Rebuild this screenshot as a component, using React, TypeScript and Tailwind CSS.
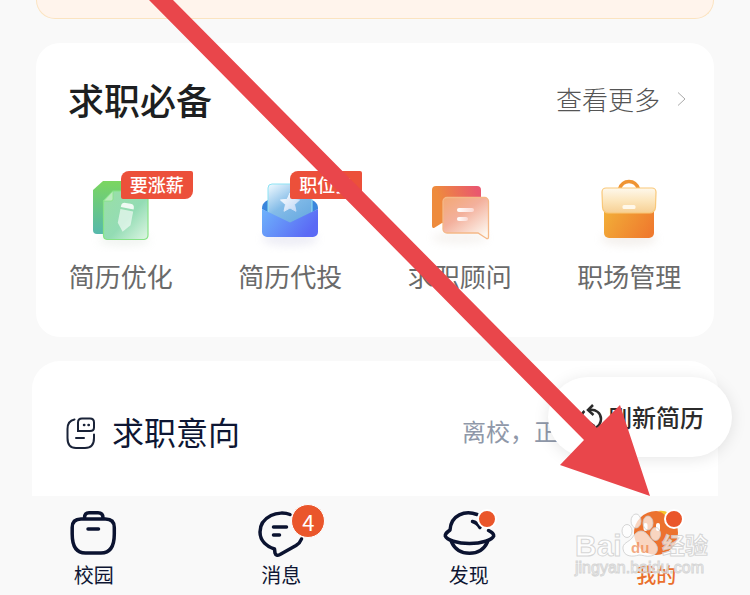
import type { ReactNode } from 'react';

type Service = { label: string; icon: ReactNode; tag?: string };
type Tab = { label: string; icon: ReactNode; count?: number; dot?: boolean; active?: boolean };

function ResumeIcon() {
return (
<svg viewBox="0 0 64 64" className="w-16 h-16 overflow-visible" aria-hidden="true">
<defs>
<linearGradient id="resBack" x1="0" y1="0" x2="0" y2="1"><stop stopColor="#7bd660" /><stop offset="1" stopColor="#56b8ac" /></linearGradient>
<linearGradient id="resFront" x1="0" y1="0" x2="1" y2="1"><stop stopColor="#9adfa6" /><stop offset="0.55" stopColor="#93dcb4" /><stop offset="1" stopColor="#dff6e4" /></linearGradient>
<filter id="soft" x="-30%" y="-50%" width="160%" height="200%"><feGaussianBlur stdDeviation="4" /></filter>
</defs>
<ellipse cx="35" cy="61" rx="26" ry="6" fill="#b7c9b7" opacity="0.2" filter="url(#soft)" />
<path d="M14 2H46a4 4 0 0 1 4 4V51a4 4 0 0 1-4 4H8a4 4 0 0 1-4-4V11Z" fill="url(#resBack)" />
<path d="M24 12H55a4 4 0 0 1 4 4V56a4.500 4.500 0 0 1-4 4.500H18a4 4 0 0 1-3.500-4V22Z" fill="url(#resFront)" stroke="#86e386" strokeWidth="1.200" />
<path d="M24 12V20a2 2 0 0 1-2 2H14.500Z" fill="#bdecbf" stroke="#86e386" strokeWidth="0.800" />
<g transform="rotate(11 36 38)" fill="#fff">
<path d="M30 28a4 4 0 0 1 4-4h5a4 4 0 0 1 4 4v1H30Z" opacity="0.85" />
<path d="M30 31H43V45L36.500 53L30 45Z" opacity="0.6" />
</g>
</svg>
);
}

function MailIcon() {
return (
<svg viewBox="0 0 64 64" className="w-16 h-16 overflow-visible" aria-hidden="true">
<defs>
<linearGradient id="mailFront" x1="0" y1="0" x2="1" y2="0.4"><stop stopColor="#6eb3fb" /><stop offset="1" stopColor="#5b6af5" /></linearGradient>
<linearGradient id="mailPaper" x1="0" y1="0" x2="0.7" y2="1"><stop stopColor="#f2fbff" /><stop offset="0.5" stopColor="#84bce8" /><stop offset="1" stopColor="#66a8e0" /></linearGradient>
<linearGradient id="mailStar" x1="0" y1="0" x2="1" y2="1"><stop stopColor="#fff" /><stop offset="1" stopColor="#bcd5f5" /></linearGradient>
</defs>
<ellipse cx="32" cy="60" rx="28" ry="7" fill="#a9a9d0" opacity="0.2" filter="url(#soft)" />
<path d="M10 21C6 23 4 25 4 30L32 46L60 30C60 25 58 23 54 21Z" fill="#3a86dc" />
<path d="M10 48V9a4 4 0 0 1 4-4H50a4 4 0 0 1 4 4V48Z" fill="url(#mailPaper)" stroke="#8ee3f4" strokeWidth="1" />
<path d="M32 14L34.800 20.300L41.500 21L36.500 25.600L38 32.300L32 29L26 32.300L27.500 25.600L22.500 21L29.200 20.300Z" fill="url(#mailStar)" stroke="url(#mailStar)" strokeWidth="1" strokeLinejoin="round" />
<path d="M4 30L32 43.500L60 30V53a5 5 0 0 1-5 5H9a5 5 0 0 1-5-5Z" fill="url(#mailFront)" />
</svg>
);
}

function AdvisorIcon() {
return (
<svg viewBox="0 0 64 64" className="w-16 h-16 overflow-visible" aria-hidden="true">
<defs>
<linearGradient id="advBack" x1="0.2" y1="0.6" x2="1" y2="0.4"><stop stopColor="#ee8b3d" /><stop offset="1" stopColor="#e9586e" /></linearGradient>
<linearGradient id="advFront" x1="0" y1="0" x2="0.8" y2="1"><stop stopColor="#f3a873" /><stop offset="0.45" stopColor="#f3b09c" /><stop offset="1" stopColor="#fdf6ee" /></linearGradient>
<linearGradient id="advBar"><stop stopColor="#fff" /><stop offset="1" stopColor="#fbd9d3" /></linearGradient>
</defs>
<ellipse cx="32" cy="59" rx="28" ry="6" fill="#c9b8a9" opacity="0.16" filter="url(#soft)" />
<path d="M8 7H49a4 4 0 0 1 4 4V44H14L6 49Q4 49.500 4 47V11a4 4 0 0 1 4-4Z" fill="url(#advBack)" />
<path d="M19 18.500H56.500a4 4 0 0 1 4 4V58Q60.500 60 58.500 59.500L50 54H19a4 4 0 0 1-4-4V22.500a4 4 0 0 1 4-4Z" fill="url(#advFront)" stroke="#f5b887" strokeWidth="1.300" />
<rect x="29" y="29" width="17" height="4" rx="2" fill="url(#advBar)" />
<rect x="29" y="38" width="11" height="4" rx="2" fill="url(#advBar)" />
</svg>
);
}

function CareerIcon() {
return (
<svg viewBox="0 0 64 64" className="w-16 h-16 overflow-visible" aria-hidden="true">
<defs>
<linearGradient id="carBody" x1="0" y1="0.3" x2="1" y2="0.7"><stop stopColor="#f2ad38" /><stop offset="1" stopColor="#ef7a2e" /></linearGradient>
<linearGradient id="carFlap" x1="0" y1="0" x2="0" y2="1"><stop stopColor="#fef8ec" /><stop offset="0.5" stopColor="#fce6bd" /><stop offset="1" stopColor="#f6cf93" /></linearGradient>
</defs>
<ellipse cx="32" cy="60" rx="28" ry="7" fill="#c9b8a9" opacity="0.2" filter="url(#soft)" />
<path d="M22.500 10Q25 2.500 32 2.500T41.500 10" fill="none" stroke="#ef9433" strokeWidth="3.500" />
<path d="M7 26H57V54a5 5 0 0 1-5 5H12a5 5 0 0 1-5-5Z" fill="url(#carBody)" />
<path d="M9 9H55a4 4 0 0 1 4 4L58.500 28a6 6 0 0 1-6 6H11.500a6 6 0 0 1-6-6L5 13a4 4 0 0 1 4-4Z" fill="url(#carFlap)" stroke="#f9c879" strokeWidth="1.200" />
<rect x="25.500" y="26" width="13" height="4" rx="1.500" fill="#fff8ea" />
</svg>
);
}

const lineIcon = 'w-12 h-12 overflow-visible fill-none stroke-[#0b1330] stroke-[3.5]';

function CampusIcon() {
return (
<svg viewBox="0 0 48 48" className={lineIcon} strokeLinecap="round" aria-hidden="true">
<path d="M14.500 10Q14.500 4.800 19 4.800H28Q33 4.800 33 10" />
<path d="M11 11H35.500Q44.300 11 44.300 19.500V26Q44.300 45 31 45H15.500Q2.200 45 2.200 26V19.500Q2.200 11 11 11Z" />
<path d="M18 21H28.500" />
</svg>
);
}

function MessageIcon() {
return (
<svg viewBox="0 0 48 48" className={lineIcon} strokeLinecap="round" strokeLinejoin="round" aria-hidden="true">
<path d="M33 6.500C28 4.500 20 4.500 14 7.500C7 11 3 17 3 24C3 33 10 38.500 17.500 41L18 45Q19 48.500 23 46.500L39 37.500Q43 35 44.500 31" />
<path d="M16.500 19H29.500M16.500 27H22.500" />
</svg>
);
}

function DiscoverIcon() {
return (
<svg viewBox="0 0 48 48" className={lineIcon} strokeLinecap="round" strokeLinejoin="round" aria-hidden="true">
<path d="M32 6.500C20 2 6 7 5 22C1 25 0 26 .3 28C2 32 12 35.500 24.500 35.500C37 35.500 47 32 48.700 28C49 25.500 47 24.500 43.500 22.500" />
<path d="M6.500 34C10 41.500 16 45.300 24.500 45.300C33 45.300 39 41.500 42.500 34" />
<path d="M27.500 13.500Q32 14.500 35 19.500" />
</svg>
);
}

function MineIcon() {
return (
<svg viewBox="0 0 48 48" className="w-12 h-12 overflow-visible" aria-hidden="true">
<circle cx="24" cy="25" r="22" fill="#ec722e" />
<path d="M26 3Q32 2 37 5L34 8Q30 4 26 3Z" fill="#f6c52f" />
<rect x="11.500" y="15" width="4" height="8" rx="2" fill="#fff" />
<rect x="24" y="15" width="4" height="8" rx="2" fill="#fff" />
</svg>
);
}

function IntentIcon() {
return (
<svg viewBox="0 0 30 32" className="w-[30px] h-8 fill-none stroke-[#1a2338] stroke-2" strokeLinecap="round" aria-hidden="true">
<path d="M8.500 2.500C3 3.500 1.500 7 1.500 12V21C1.500 28 4 31 10 31H19C25 31 28 28 28 21V17.500" />
<path d="M16 1.500H24Q28 1.500 28 5.500V10.500Q28 14 24 14H12V5.500Q12 1.500 16 1.500Z" />
<path d="M10 21H18" />
<path d="M18 8H18.300M22.500 8H22.800" strokeWidth="2.500" />
</svg>
);
}

function RefreshIcon() {
return (
<svg viewBox="0 0 24 28" className="w-6 h-7 fill-none stroke-[#2b2b2b] stroke-[2.5]" aria-hidden="true">
<path d="M9 7C16 6 21 10 21 16C21 20 19 23 15 25" />
<path d="M13 2L8 7L13.500 12" />
<path d="M13 22.500C6 24 1.500 20 1.500 14.500C1.500 11.500 2.500 9.500 4.500 8" />
<path d="M8.500 28L13.500 22.500L7.500 18.500" />
</svg>
);
}

const services: Service[] = [
{ label: '简历优化', icon: <ResumeIcon />, tag: '要涨薪' },
{ label: '简历代投', icon: <MailIcon />, tag: '职位多' },
{ label: '求职顾问', icon: <AdvisorIcon /> },
{ label: '职场管理', icon: <CareerIcon /> },
];

const tabs: Tab[] = [
{ label: '校园', icon: <CampusIcon /> },
{ label: '消息', icon: <MessageIcon />, count: 4 },
{ label: '发现', icon: <DiscoverIcon />, dot: true },
{ label: '我的', icon: <MineIcon />, dot: true, active: true },
];

function Watermark() {
return (
<svg viewBox="0 0 136 68" className="absolute right-10 bottom-4 w-[136px] h-[68px] overflow-visible pointer-events-none font-['Liberation_Sans','Noto_Sans_CJK_SC',sans-serif]" fill="#fff" fillOpacity="0.7" stroke="#cccccc" strokeOpacity="0.8" strokeWidth="1">
<text x="1" y="45" fontSize="30" fontWeight="700">Bai</text>
<ellipse cx="53" cy="20" rx="5" ry="6.500" />
<ellipse cx="62" cy="10" rx="5" ry="7" />
<ellipse cx="74" cy="12" rx="5" ry="7" />
<ellipse cx="81.500" cy="23" rx="5" ry="6.500" />
<path d="M67 20C73 20 75 27 80 31C86 36 84 44 77 45C72 46 69 44 65 44C59 46 50 46 49 38C48 32 55 31 58 27C61 23 63 20 67 20Z" />
<text x="57" y="42" fontSize="15" fontWeight="700" fill="#ec722e" fillOpacity="0.6" stroke="none">du</text>
<text x="88" y="43" fontSize="23" fontWeight="700">经验</text>
<text x="1" y="62" fontSize="16">jingyan.baidu.com</text>
</svg>
);
}

function Arrow() {
return (
<svg viewBox="0 0 750 595" className="absolute left-0 top-0 z-20 w-[750px] h-[595px] pointer-events-none" aria-hidden="true">
<path d="M149 0H173L597 428L620 405L650 496L560 465L584 440Z" fill="#e9464b" />
</svg>
);
}

export default function App() {
return (
<div className="relative min-h-screen overflow-hidden flex flex-col bg-[#f9f9f9] font-['Noto_Sans_CJK_SC',sans-serif]">
<main className="flex-1 flex flex-col gap-6">
<div className="mx-9 h-[19px] rounded-b-3xl border border-t-0 border-[#fbe3c0] bg-[#fff4ec]" />

<section className="mx-9 rounded-3xl bg-white pt-[38px] pb-12">
<div className="flex items-center justify-between pl-8 pr-6">
<h2 className="text-[36px] leading-9 font-medium text-[#1d1f21]">求职必备</h2>
<a href="#more" className="flex items-center gap-3 text-[26px] leading-9 font-light text-[#555]">
查看更多
<svg viewBox="0 0 18 18" className="w-[18px] h-[18px] fill-none stroke-[#aaa]" aria-hidden="true"><path d="M6 2.500L13 9L6 15.500" /></svg>
</a>
</div>
<div className="mt-[62px] grid grid-cols-4">
{services.map(s => (
<a key={s.label} href="#service" className="flex flex-col items-center gap-5">
<span className="relative">
{s.icon}
{s.tag && (
<span className="absolute left-8 -top-2 w-[72px] h-7 flex items-center justify-center rounded-tl-lg rounded-br-lg rounded-tr-xs rounded-bl-xs bg-[#ec503a] text-[18px] leading-[26px] pb-0.5 font-medium text-white whitespace-nowrap">{s.tag}</span>
)}
</span>
<span className="text-[26px] leading-[26px] text-[#6a6a6a]">{s.label}</span>
</a>
))}
</div>
</section>

<section className="relative mx-8 flex-1 rounded-t-[28px] bg-white pt-14 pb-[47px] pl-[34px] pr-16 flex items-start justify-between">
<div className="flex items-start gap-4">
<IntentIcon />
<h2 className="text-[32px] leading-7 text-[#0e1633]">求职意向</h2>
</div>
<span className="text-[24px] leading-7 text-[#8f98a9]">离校，正在找工作</span>
<button type="button" className="absolute -right-3.5 top-4 h-20 w-[184px] pl-8 flex items-center gap-1 rounded-full bg-white shadow-[0_2px_16px_rgba(0,0,0,0.1)] text-[24px] leading-6 font-medium text-[#2b2b2b] whitespace-nowrap">
<RefreshIcon />
刷新简历
</button>
</section>
</main>

<nav className="relative grid grid-cols-4 bg-[#f9f9f9] pt-3 pb-2">
{tabs.map(t => (
<a key={t.label} href="#tab" className="flex flex-col items-center gap-[7px] pb-px">
<span className="relative">
{t.icon}
{t.count && (
<span className="absolute left-[34px] -top-1 size-[34px] flex items-center justify-center rounded-full border border-white bg-[#ea562b] text-[22px] leading-none text-white">{t.count}</span>
)}
{t.dot && <span className="absolute left-8 top-px size-5 rounded-full border-2 border-white bg-[#ea562b]" />}
</span>
<span className={t.active ? 'text-[20px] leading-[23px] font-medium text-[#ea6f2c]' : 'text-[20px] leading-[23px] text-[#0e1633]'}>{t.label}</span>
</a>
))}
<Watermark />
</nav>

<Arrow />
</div>
);
}
